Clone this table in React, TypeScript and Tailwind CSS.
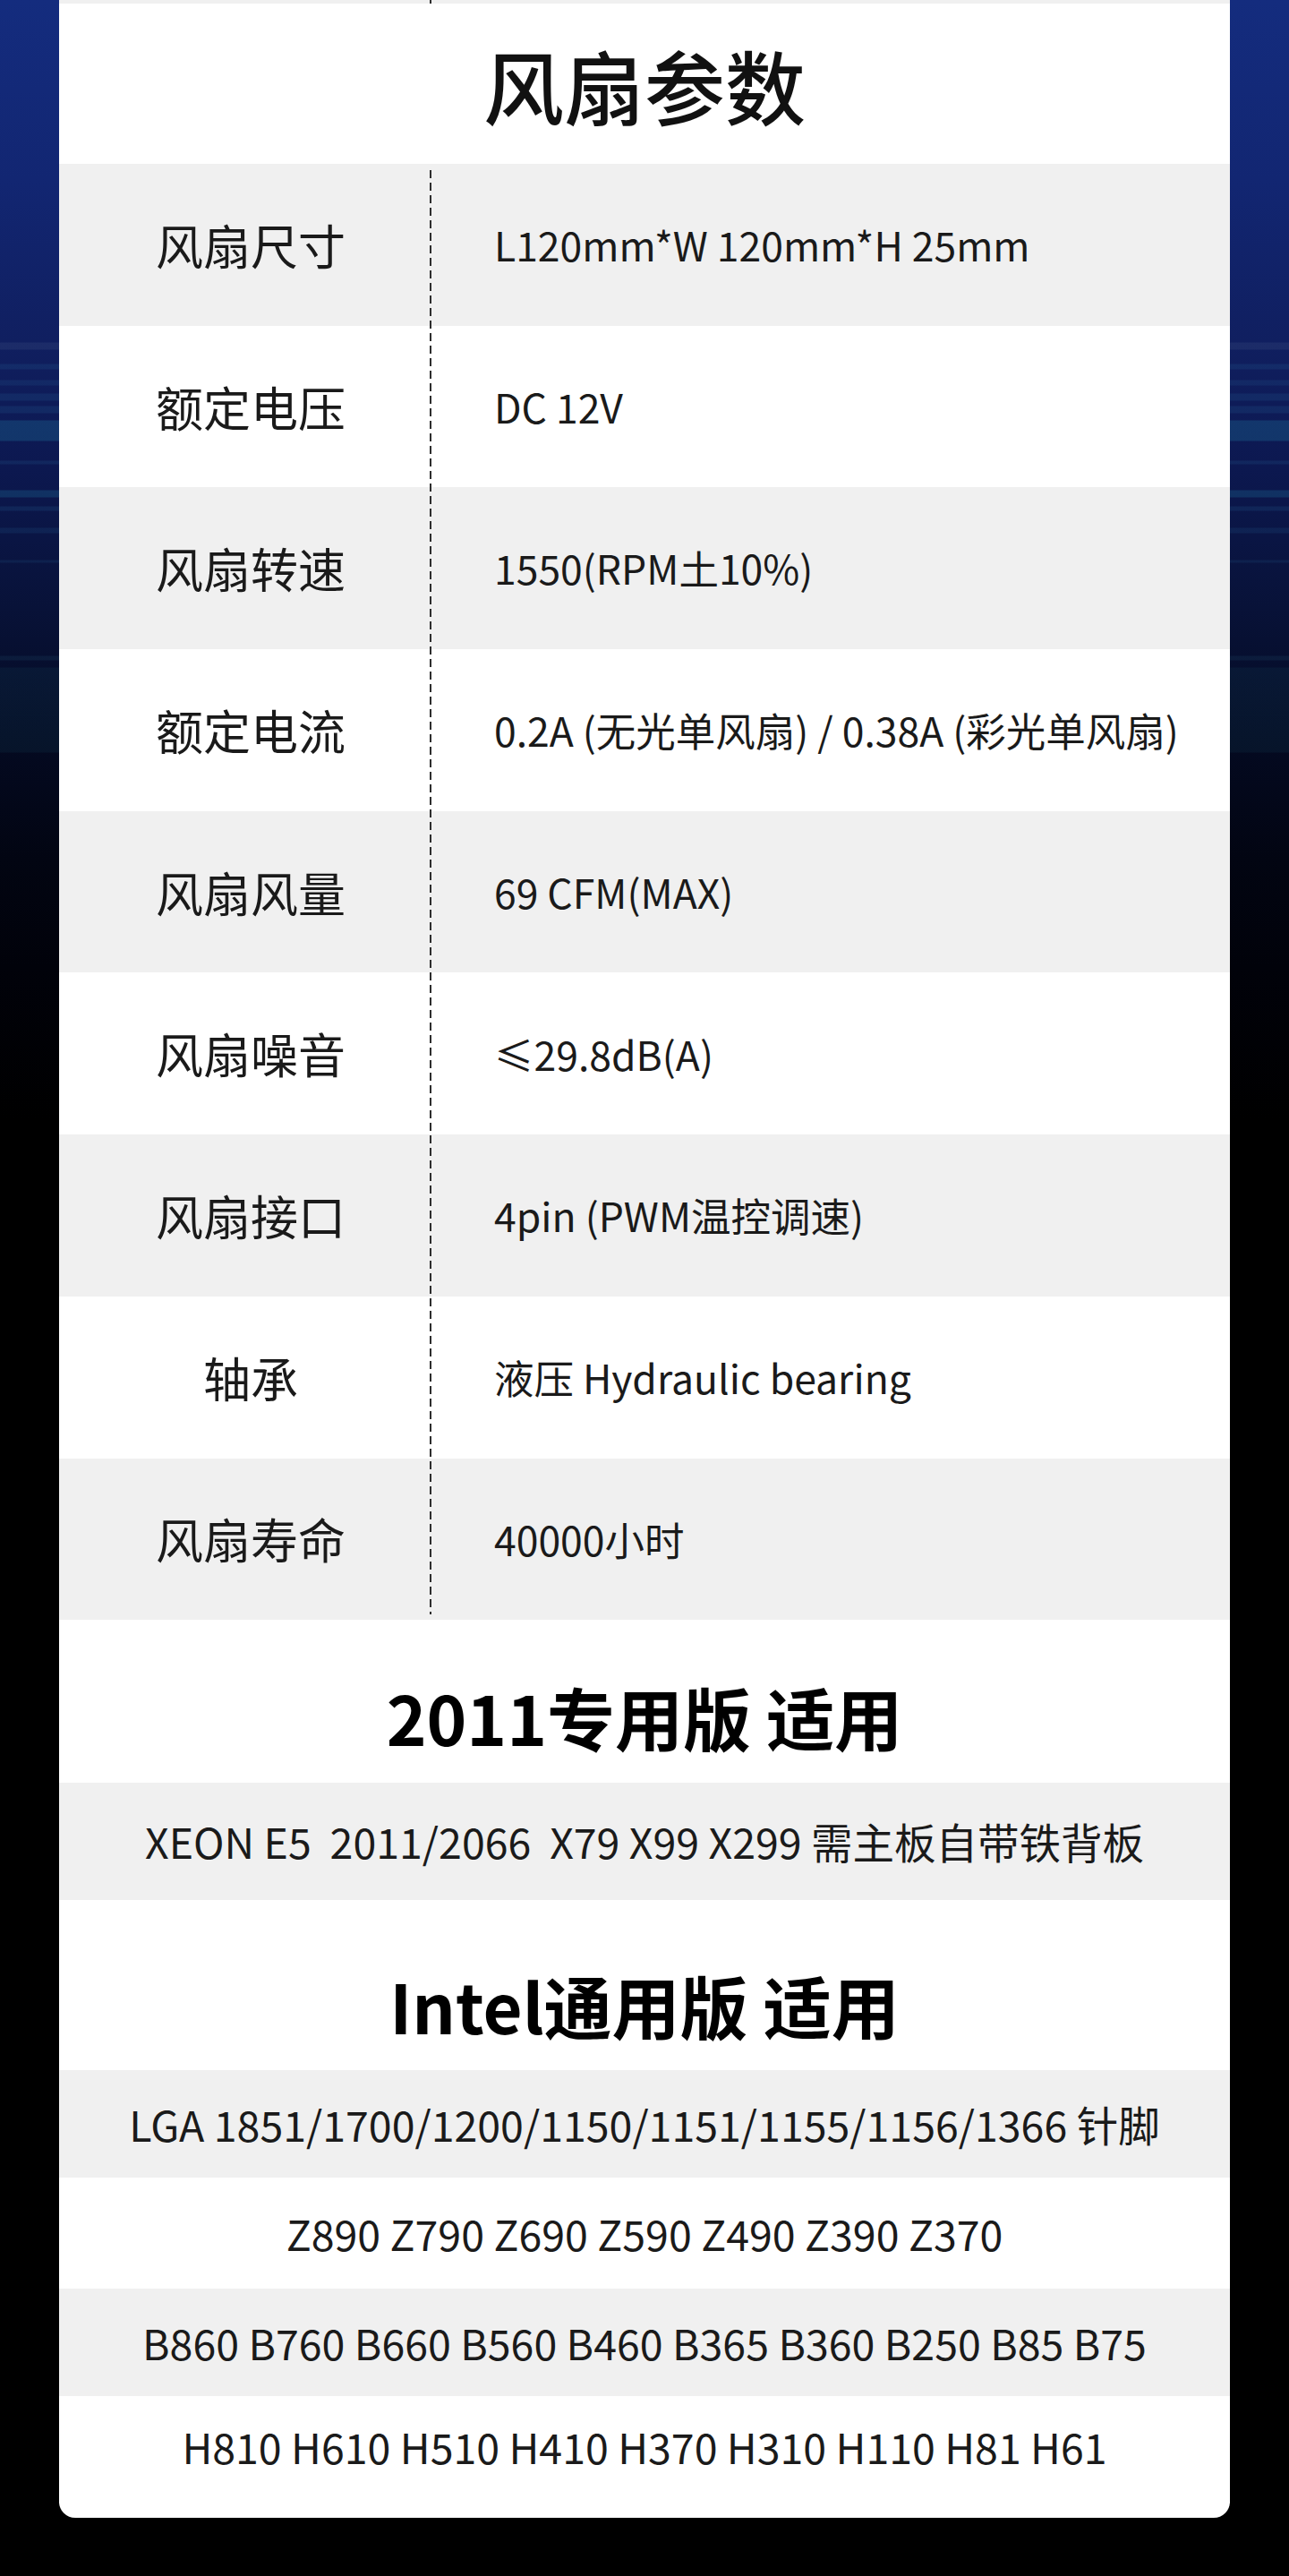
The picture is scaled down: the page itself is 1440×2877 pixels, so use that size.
const SPECS: { label: string; value: string; indent?: string }[] = [
  { label: "风扇尺寸", value: "L120mm*W 120mm*H 25mm" },
  { label: "额定电压", value: "DC 12V" },
  { label: "风扇转速", value: "1550(RPM土10%)", indent: "pl-[5px]" },
  { label: "额定电流", value: "0.2A (无光单风扇) / 0.38A (彩光单风扇)" },
  { label: "风扇风量", value: "69 CFM(MAX)" },
  { label: "风扇噪音", value: "≤29.8dB(A)", indent: "pl-[13px]" },
  { label: "风扇接口", value: "4pin (PWM温控调速)" },
  { label: "轴承", value: "液压 Hydraulic bearing" },
  { label: "风扇寿命", value: "40000小时" },
];

const INTEL_ROWS = [
  { text: "LGA 1851/1700/1200/1150/1151/1155/1156/1366 针脚", h: "h-[120px]" },
  { text: "Z890 Z790 Z690 Z590 Z490 Z390 Z370", h: "h-[124px]" },
  { text: "B860 B760 B660 B560 B460 B365 B360 B250 B85 B75", h: "h-[120px]" },
  { text: "H810 H610 H510 H410 H370 H310 H110 H81 H61", h: "h-[120px] pb-[8px]" },
];

function Dashes({ className }: { className: string }) {
  return (
    <div
      className={`absolute left-[414px] w-[2px] bg-[repeating-linear-gradient(to_bottom,#2e2e2e_0px,#2e2e2e_9px,transparent_9px,transparent_14px)] ${className}`}
    />
  );
}

export default function App() {
  return (
    <div className="min-h-[2877px] w-[1440px] bg-black bg-[image:linear-gradient(to_bottom,transparent_0px,transparent_382px,rgba(90,110,150,0.16)_383px,rgba(90,110,150,0.16)_390px,transparent_391px,transparent_406px,rgba(40,110,160,0.17)_407px,rgba(40,110,160,0.17)_412px,transparent_413px,transparent_424px,rgba(40,110,160,0.15)_425px,rgba(40,110,160,0.15)_430px,transparent_431px,transparent_439px,rgba(40,110,160,0.17)_440px,rgba(40,110,160,0.17)_447px,transparent_448px,transparent_453px,rgba(40,110,160,0.17)_454px,rgba(40,110,160,0.17)_461px,transparent_462px,transparent_469px,rgba(30,120,160,0.3)_470px,rgba(30,120,160,0.3)_492px,transparent_493px,transparent_514px,rgba(40,110,160,0.17)_515px,rgba(40,110,160,0.17)_518px,transparent_519px,transparent_547px,rgba(30,120,160,0.27)_548px,rgba(30,120,160,0.27)_555px,transparent_556px,transparent_565px,rgba(40,110,160,0.17)_566px,rgba(40,110,160,0.17)_570px,transparent_571px,transparent_589px,rgba(40,110,160,0.15)_590px,rgba(40,110,160,0.15)_595px,transparent_596px,transparent_625px,rgba(40,110,160,0.14)_626px,rgba(40,110,160,0.14)_628px,transparent_629px,transparent_732px,rgba(40,100,130,0.15)_733px,rgba(40,100,130,0.15)_737px,transparent_738px,transparent_745px,rgba(20,70,90,0.18)_746px,rgba(20,70,90,0.18)_840px,transparent_841px),linear-gradient(to_bottom,#142c7e_0px,#122672_200px,#101f60_380px,#0c1850_520px,#081238_680px,#040a22_820px,#020512_960px,#01020a_1080px,#000000_1250px)] bg-no-repeat font-['Noto_Sans_CJK_SC','Noto_Sans',sans-serif]">
      <div className="mx-[66px] overflow-hidden rounded-b-[18px] bg-white">
        {/* tail of the previous table */}
        <div className="relative h-[4px] bg-[#f0f0f0]">
          <Dashes className="top-0 bottom-0" />
        </div>

        <div className="flex h-[179px] items-center justify-center">
          <h2 className="text-[90px] leading-none font-medium text-[#111]">风扇参数</h2>
        </div>

        <div className="relative">
          {SPECS.map((row, i) => (
            <div
              key={row.label}
              className={`flex h-[180.7px] items-center ${i % 2 === 0 ? "bg-[#f0f0f0]" : "bg-white"}`}
            >
              <div className="flex w-[415px] justify-center pl-[13px] text-[53px] leading-none text-[#1a1a1a]">
                {row.label}
              </div>
              <div className={`pl-[71px] text-[44.5px] leading-none text-[#1a1a1a] ${row.indent ?? ""}`}>
                {row.value}
              </div>
            </div>
          ))}
          <Dashes className="top-[7px] bottom-[6px]" />
        </div>

        <div className="flex h-[182px] items-center justify-center pt-[34px]">
          <h3 className="text-[76px] leading-none font-bold text-black">2011专用版 适用</h3>
        </div>
        <div className="flex h-[131px] items-center justify-center bg-[#f0f0f0] text-[46.5px] leading-none whitespace-pre text-[#1a1a1a]">
          XEON E5  2011/2066  X79 X99 X299 需主板自带铁背板
        </div>

        <div className="flex h-[190px] items-center justify-center pt-[44px]">
          <h3 className="text-[76px] leading-none font-bold text-black">Intel通用版 适用</h3>
        </div>
        {INTEL_ROWS.map((row, i) => (
          <div
            key={row.text}
            className={`flex ${row.h} items-center justify-center text-[46.5px] leading-none text-[#1a1a1a] ${i % 2 === 0 ? "bg-[#f0f0f0]" : "bg-white"}`}
          >
            {row.text}
          </div>
        ))}
        <div className="h-[16px]" />
      </div>
    </div>
  );
}
